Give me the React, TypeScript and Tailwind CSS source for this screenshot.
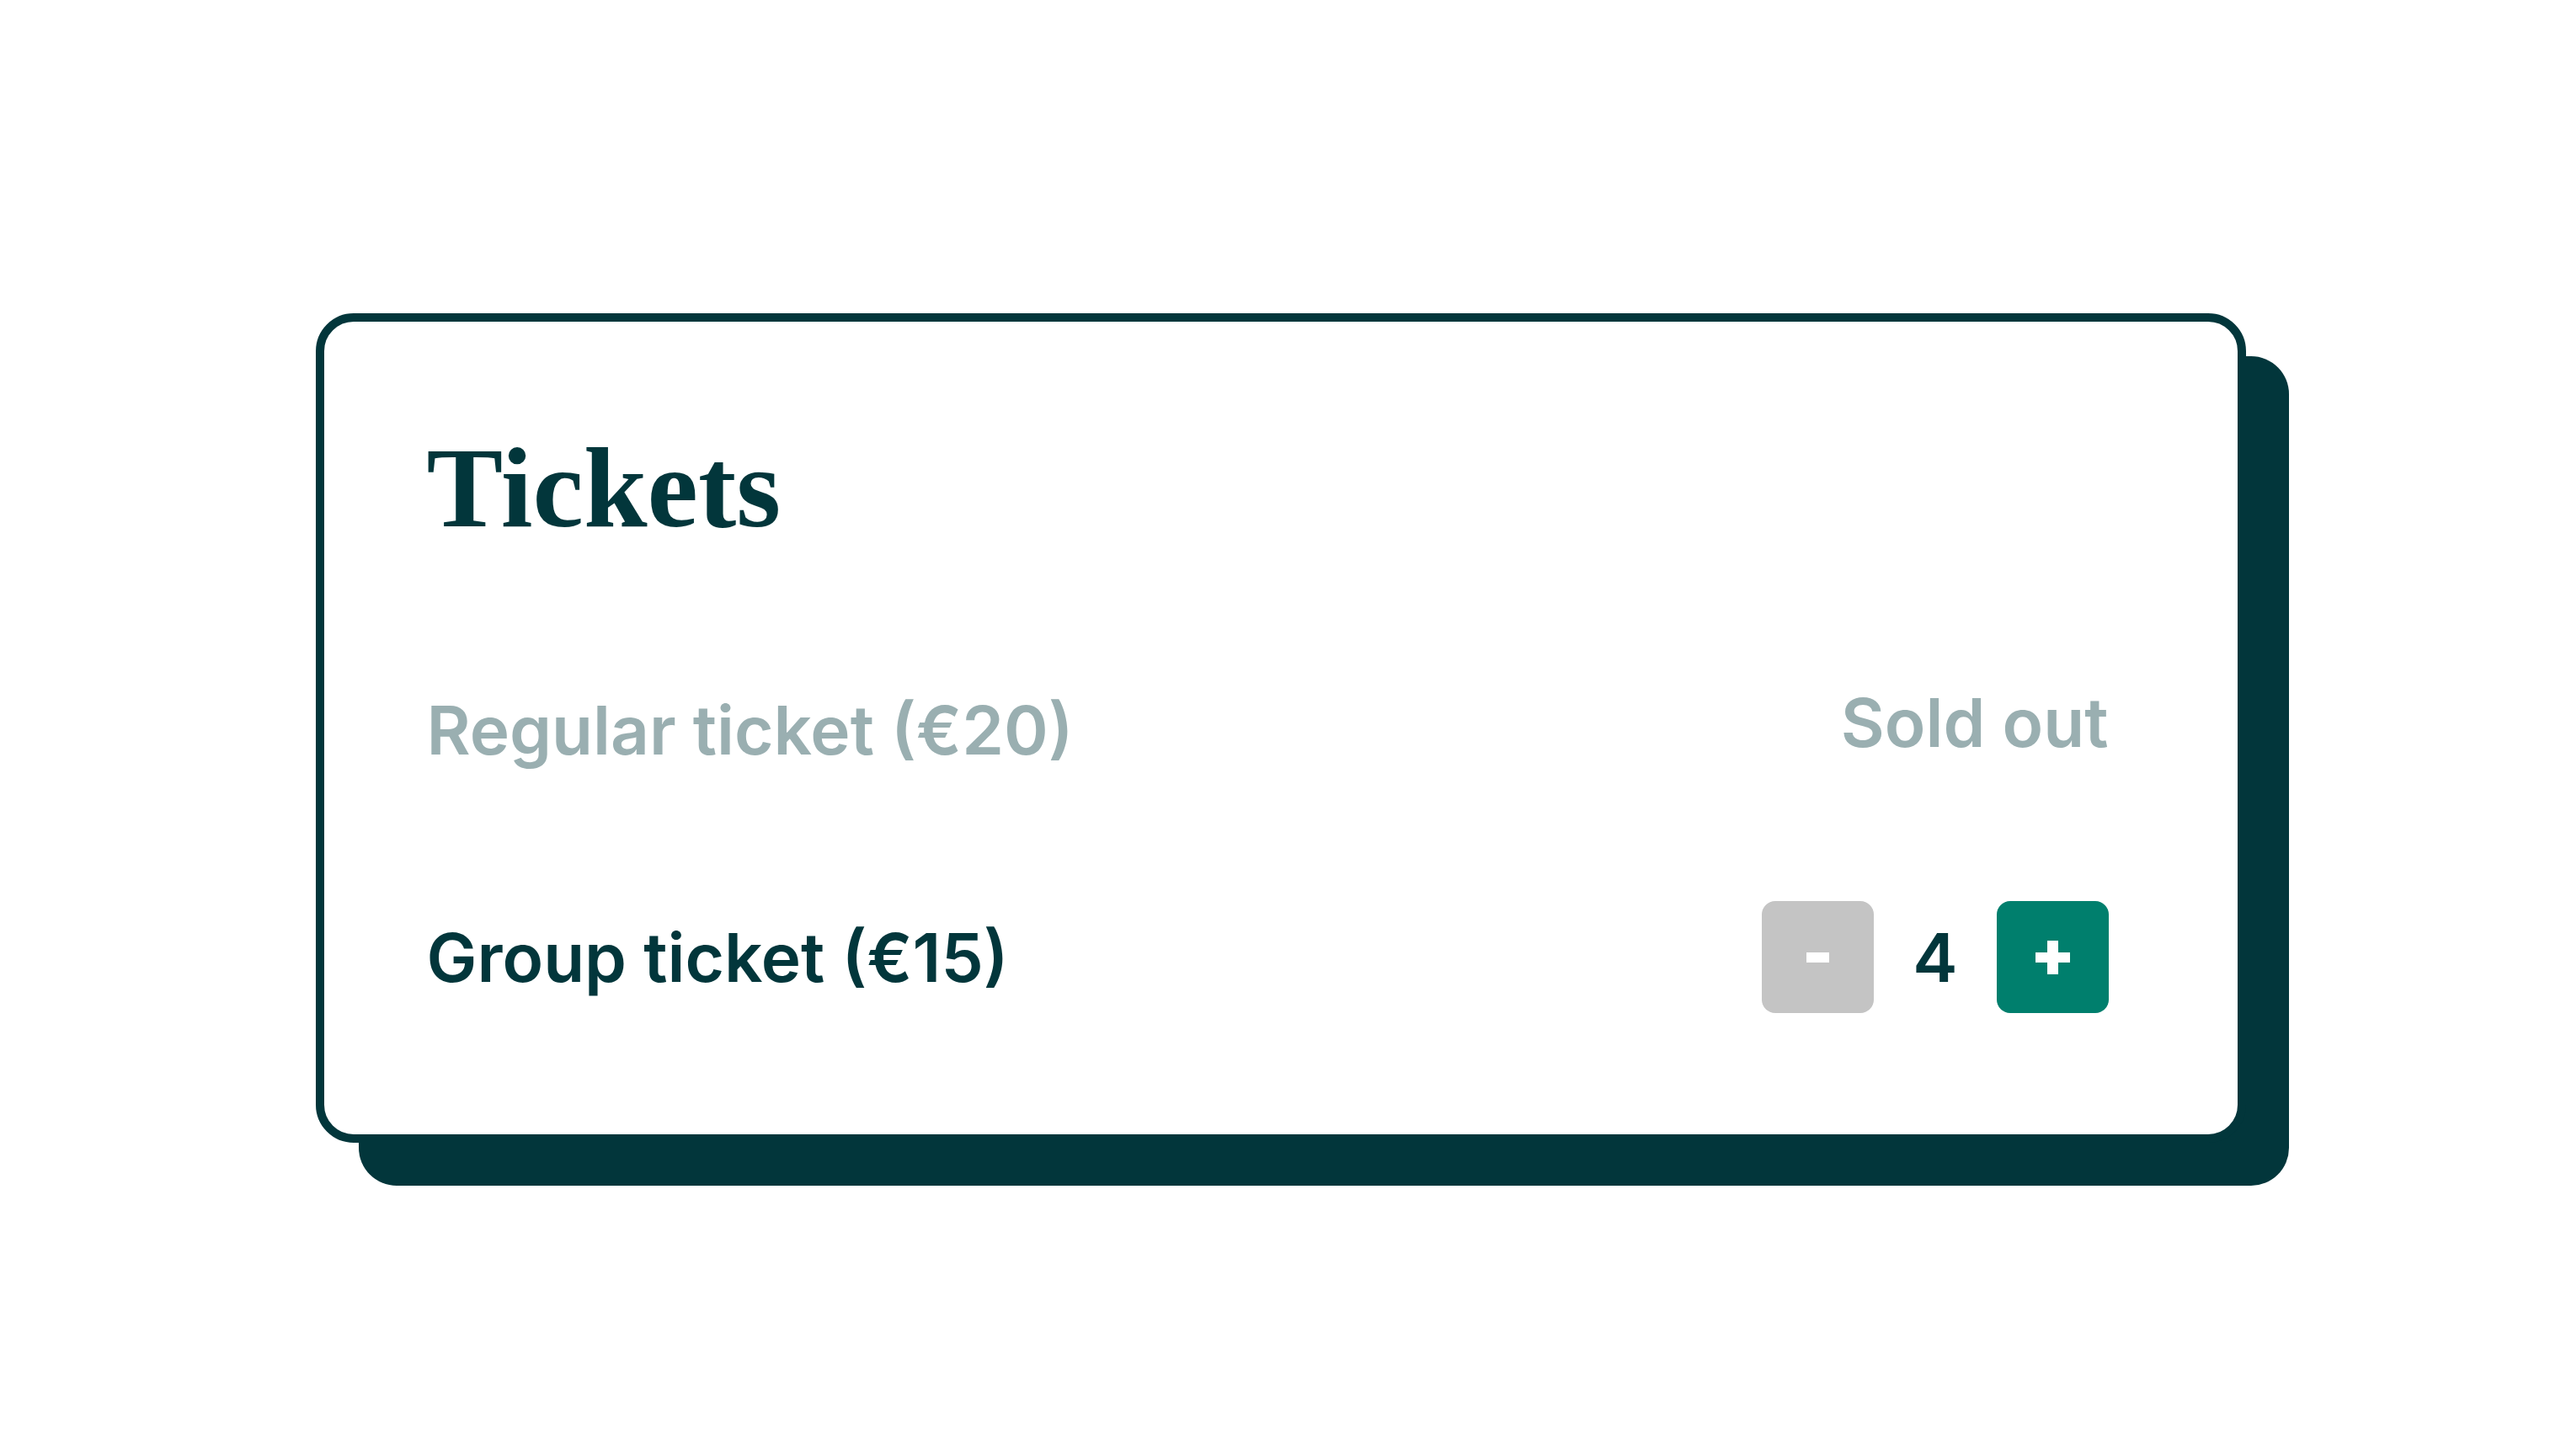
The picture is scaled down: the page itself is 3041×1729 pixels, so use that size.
const tickets = [
  { name: 'Regular ticket (€20)', soldOut: true, count: 0 },
  { name: 'Group ticket (€15)', soldOut: false, count: 4 },
]

export default function App() {
  return (
    <div className="min-h-screen w-full bg-white flex items-center justify-center font-['Inter',sans-serif]">
      <div className="w-[2292px] h-[985px] rounded-[45px] border-[10px] border-[#02363b] bg-white shadow-[51px_51px_0_0_#02363b] pt-[129px] pl-[122px] pr-[153px] flex flex-col">
        <h1 className="font-['Liberation_Serif',serif] font-bold text-[136px] leading-none text-[#02363b] h-[136px]">
          Tickets
        </h1>

        {/* first row: sold out */}
        <div className="mt-[180px] h-[80px] flex items-center justify-between">
          <span className="text-[80px] leading-none font-semibold text-[#9aafb1]">{tickets[0].name}</span>
          <span className="text-[80px] leading-none font-semibold text-[#9aafb1] mb-[18px]">Sold out</span>
        </div>

        {/* second row: counter */}
        <div className="mt-[163px] h-[133px] flex items-center justify-between">
          <span className="text-[80px] leading-none font-semibold text-[#02363b]">{tickets[1].name}</span>
          <div className="flex items-center gap-[46px]">
            <button className="w-[133px] h-[133px] rounded-[16px] bg-[#c4c4c4] flex items-center justify-center">
              <span className="block w-[27px] h-[12px] bg-white" />
            </button>
            <span className="text-[80px] leading-none font-semibold text-[#02363b]">{tickets[1].count}</span>
            <button className="relative w-[133px] h-[133px] rounded-[16px] bg-[#007f6d] flex items-center justify-center">
              <span className="absolute w-[41px] h-[12px] bg-white" />
              <span className="absolute w-[13px] h-[40px] bg-white" />
            </button>
          </div>
        </div>
      </div>
    </div>
  )
}
